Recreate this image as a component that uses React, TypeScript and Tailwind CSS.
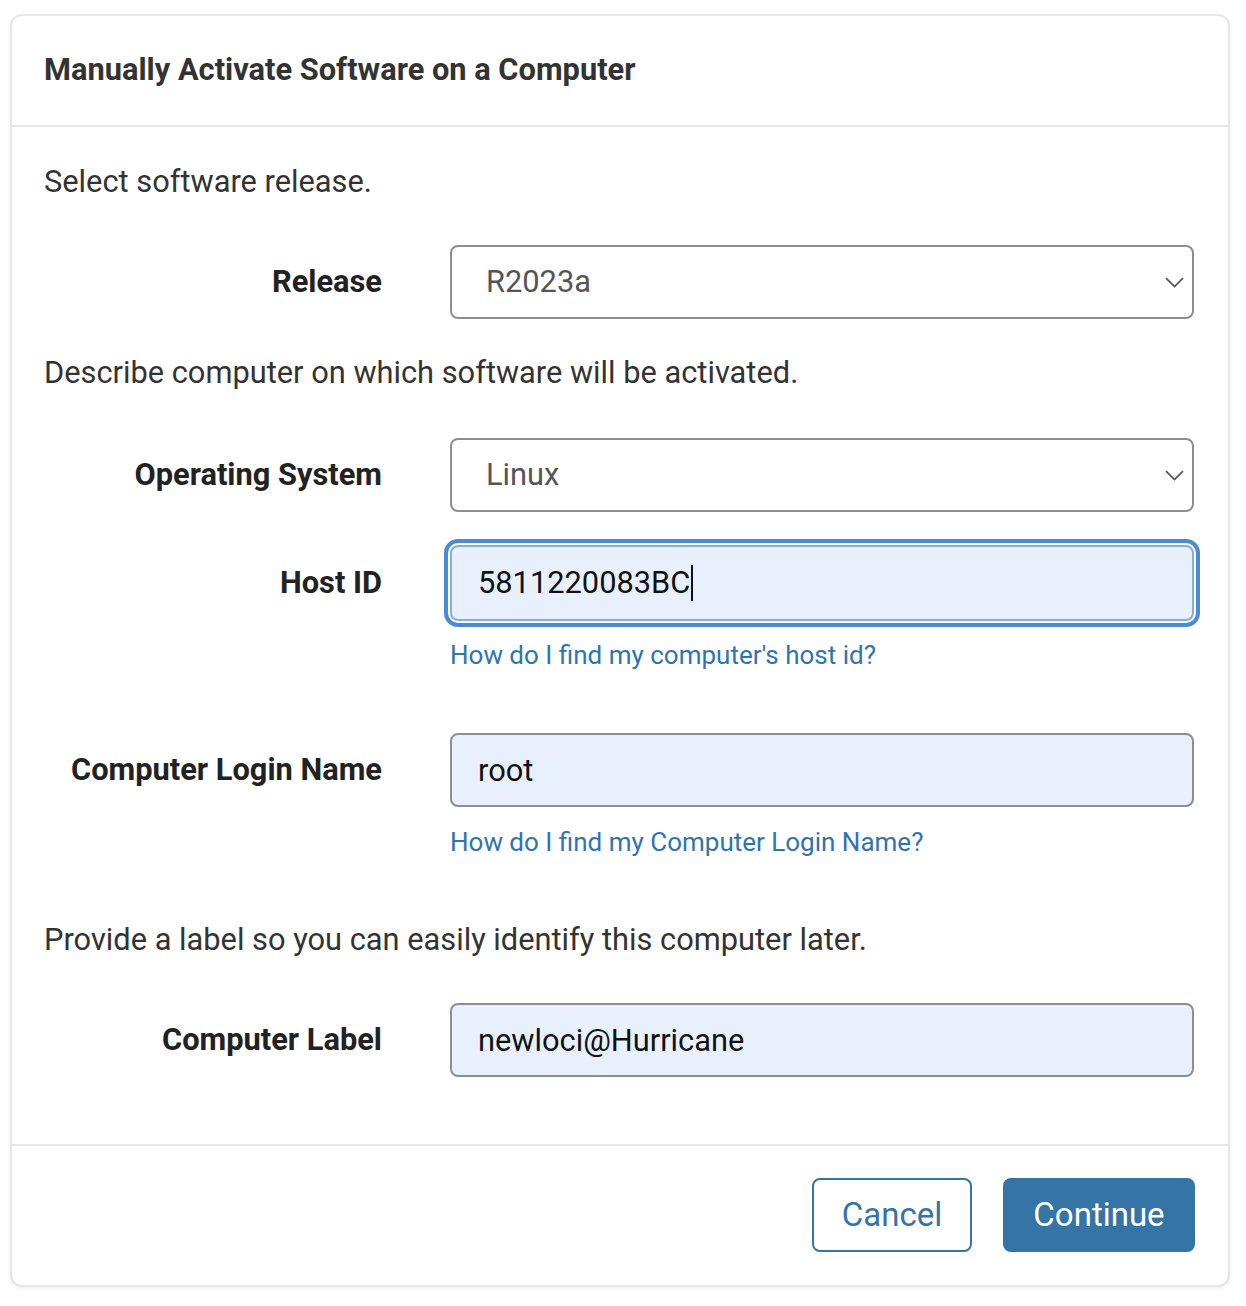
const rowLabel = 'w-[338px] shrink-0 text-right text-[30.8px] font-bold text-[#222]';
const field = 'h-[74px] flex-1 rounded-[8px] border-2 border-[#8e8e8e] bg-[#e8f0fe] px-[26px] text-[30.8px] text-[#111] outline-none';

function SelectField({ value }: { value: string }) {
  return (
    <div className="relative flex-1">
      <select
        defaultValue={value}
        className="h-[74px] w-full appearance-none rounded-[8px] border-2 border-[#8e8e8e] bg-white pl-[34px] text-[30.8px] text-[#555] outline-none"
      >
        <option>{value}</option>
      </select>
      <svg className="pointer-events-none absolute right-[10px] top-[32px]" width="19" height="11" viewBox="0 0 19 11" fill="none">
        <path d="M1 1.2L9.5 9.5L18 1.2" stroke="#555" strokeWidth="1.7" />
      </svg>
    </div>
  );
}

export default function App() {
  return (
    <div className="min-h-screen bg-white pl-[10px] pt-[14px] font-['Roboto',sans-serif]">
      <div className="w-[1220px] rounded-[12px] border-2 border-[#e6e6e6] bg-white shadow-[0_2px_4px_rgba(0,0,0,0.06)]">
        {/* Header */}
        <div className="flex h-[111px] items-center border-b-2 border-[#e6e6e6] px-[32px]">
          <h1 className="text-[30.8px] font-bold text-[#333]">Manually Activate Software on a Computer</h1>
        </div>

        {/* Body */}
        <div className="pb-[67px] pl-[32px] pr-[34px] pt-[35px] text-[#333]">
          <p className="text-[30.8px] leading-[40px]">Select software release.</p>

          <div className="mt-[43px] flex items-center gap-[68px]">
            <label className={rowLabel}>Release</label>
            <SelectField value="R2023a" />
          </div>

          <p className="mt-[34px] text-[30.8px] leading-[40px]">Describe computer on which software will be activated.</p>

          <div className="mt-[45px] flex items-center gap-[68px]">
            <label className={rowLabel}>Operating System</label>
            <SelectField value="Linux" />
          </div>

          <div className="mt-[33px] flex items-center gap-[68px]">
            <label className={rowLabel}>Host ID</label>
            <div className="flex h-[76px] flex-1 items-center rounded-[8px] border-2 border-[#7fb0e6] bg-[#e8f0fe] px-[26px] text-[30.8px] text-[#111] outline-4 outline-offset-2 outline-[#4a8ad6]">
              5811220083BC<span className="ml-[1px] inline-block h-[36px] w-[2px] bg-[#111]" />
            </div>
          </div>
          <div className="flex gap-[68px]">
            <div className="w-[338px] shrink-0" />
            <a className="mt-[16px] text-[26px] leading-[36px] text-[#2e74b3]">How do I find my computer's host id?</a>
          </div>

          <div className="mt-[60px] flex items-center gap-[68px]">
            <label className={rowLabel}>Computer Login Name</label>
            <input readOnly value="root" className={field} />
          </div>
          <div className="flex gap-[68px]">
            <div className="w-[338px] shrink-0" />
            <a className="mt-[17px] text-[26px] leading-[36px] text-[#2e74b3]">How do I find my Computer Login Name?</a>
          </div>

          <p className="mt-[60px] text-[30.8px] leading-[40px]">Provide a label so you can easily identify this computer later.</p>

          <div className="mt-[43px] flex items-center gap-[68px]">
            <label className={rowLabel}>Computer Label</label>
            <input readOnly value="newloci@Hurricane" className={field} />
          </div>
        </div>

        {/* Footer */}
        <div className="flex justify-end gap-[31px] border-t-2 border-[#e6e6e6] px-[33px] pb-[33px] pt-[32px]">
          <button className="h-[74px] w-[160px] rounded-[8px] border-2 border-[#3574a6] bg-white text-[33px] text-[#3574a6]">
            Cancel
          </button>
          <button className="h-[74px] w-[192px] rounded-[8px] bg-[#3574a6] text-[33px] text-white">
            Continue
          </button>
        </div>
      </div>
    </div>
  );
}
